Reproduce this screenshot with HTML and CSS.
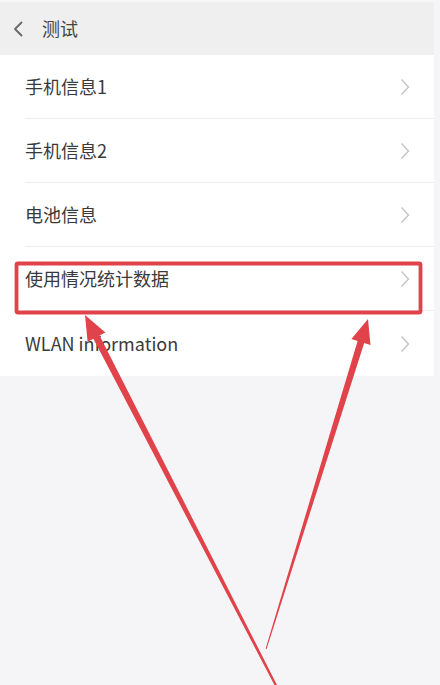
FILE: index.html
```html
<!DOCTYPE html>
<html lang="zh">
<head>
<meta charset="utf-8">
<title>测试</title>
<link rel="stylesheet" href="styles.css">
</head>
<body>
<div class="screen">
  <header class="topbar">
    <svg class="back" viewBox="0 0 12 16" width="12" height="16"><path d="M9.5 1.5 L3 8 L9.5 14.5" fill="none" stroke="#666" stroke-width="1.8" stroke-linecap="round" stroke-linejoin="round"/></svg>
    <span class="title">测试</span>
  </header>
  <ul class="list">
    <li class="row"><span class="label">手机信息1</span><svg class="chev" viewBox="0 0 10 18" width="10" height="18"><path d="M1.5 1.5 L8.5 9 L1.5 16.5" fill="none" stroke="#c6c6c6" stroke-width="1.5"/></svg></li>
    <li class="row"><span class="label">手机信息2</span><svg class="chev" viewBox="0 0 10 18" width="10" height="18"><path d="M1.5 1.5 L8.5 9 L1.5 16.5" fill="none" stroke="#c6c6c6" stroke-width="1.5"/></svg></li>
    <li class="row"><span class="label">电池信息</span><svg class="chev" viewBox="0 0 10 18" width="10" height="18"><path d="M1.5 1.5 L8.5 9 L1.5 16.5" fill="none" stroke="#c6c6c6" stroke-width="1.5"/></svg></li>
    <li class="row"><span class="label">使用情况统计数据</span><svg class="chev" viewBox="0 0 10 18" width="10" height="18"><path d="M1.5 1.5 L8.5 9 L1.5 16.5" fill="none" stroke="#c6c6c6" stroke-width="1.5"/></svg></li>
    <li class="row last"><span class="label">WLAN information</span><svg class="chev" viewBox="0 0 10 18" width="10" height="18"><path d="M1.5 1.5 L8.5 9 L1.5 16.5" fill="none" stroke="#c6c6c6" stroke-width="1.5"/></svg></li>
  </ul>
  <svg class="overlay" viewBox="0 0 440 685" width="440" height="685">
    <rect x="16.5" y="261.5" width="404" height="49" fill="none" stroke="#e1434a" stroke-width="3.8" rx="1.5"/>
    <polygon fill="#e1434a" points="85,313 105.4,330.6 99.6,333.6 278.5,686 276.5,687 93.4,336.8 87.6,339.8"/>
    <polygon fill="#e1434a" points="368,317 370.5,342.9 364.2,340.9 266.6,647 265.6,646.8 357.6,338.9 351.4,337"/>
  </svg>
</div>
</body>
</html>
```

FILE: styles.css
```css
html, body {
  margin: 0;
  padding: 0;
}
body {
  background: #f6f6f8;
  font-family: "Noto Sans CJK SC", "Noto Sans", sans-serif;
  width: 440px;
  height: 685px;
  overflow: hidden;
}
.screen {
  position: relative;
  width: 440px;
  height: 685px;
  background: #f5f5f7;
}
.topbar {
  margin-top: 2px;
  height: 53px;
  width: 434px;
  background: #efefef;
  display: flex;
  align-items: center;
  box-sizing: border-box;
  padding-left: 12px;
}
.back {
  display: block;
}
.title {
  margin-left: 18px;
  font-size: 18px;
  color: #444;
  line-height: 1;
  padding-bottom: 2px;
}
.list {
  list-style: none;
  margin: 0;
  padding: 0;
  width: 434px;
  background: #fff;
}
.row {
  height: 64px;
  box-sizing: border-box;
  margin-left: 25px;
  padding-right: 24px;
  border-bottom: 1px solid #eeeeee;
  display: flex;
  align-items: center;
  justify-content: space-between;
}
.row.last {
  border-bottom: none;
  height: 65px;
}
.label {
  font-size: 18px;
  color: #3a3a3a;
  line-height: 1;
  padding-bottom: 1px;
}
.chev {
  display: block;
}
.overlay {
  position: absolute;
  left: 0;
  top: 0;
  pointer-events: none;
}
```
